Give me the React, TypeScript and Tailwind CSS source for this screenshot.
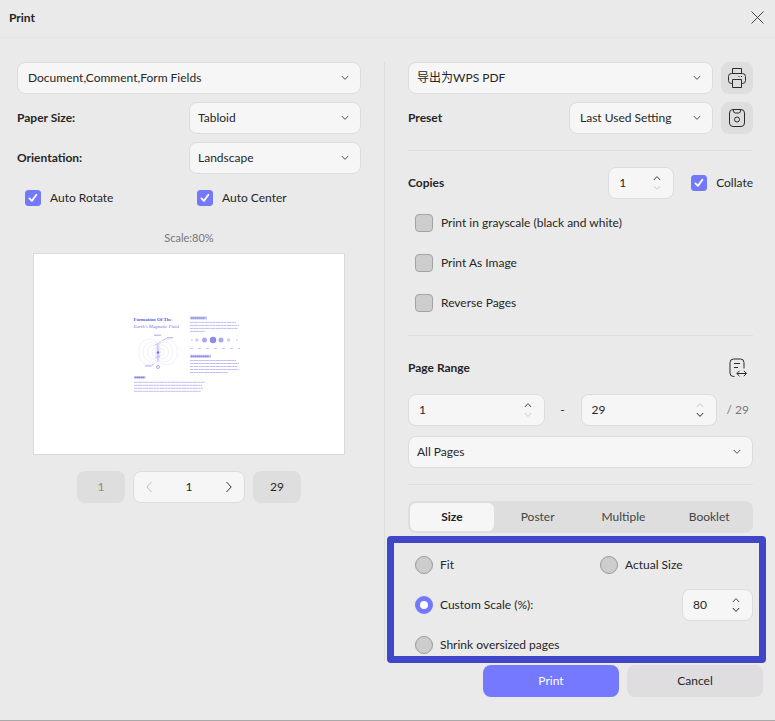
import { useState, type ReactNode } from "react";

function ChevronDown({ className = "" }: { className?: string }) {
  return (
    <svg className={className} width="8" height="6" viewBox="0 0 8 6" fill="none" stroke="currentColor" strokeWidth="1">
      <path d="M0.8 1 4 4.4 7.2 1" />
    </svg>
  );
}

function SelectBox({ label, options, className = "", pad = "pl-2" }: { label: string; options: string[]; className?: string; pad?: string }) {
  return (
    <div className={`relative ${className}`}>
      <select
        aria-label={label}
        className={`h-8 w-full appearance-none rounded-lg border border-[#dcdcdc] bg-[#f6f6f6] pr-8 outline-none ${pad}`}
      >
        {options.map((o) => (
          <option key={o}>{o}</option>
        ))}
      </select>
      <ChevronDown className="pointer-events-none absolute top-[13px] right-3 text-[#555]" />
    </div>
  );
}

function Spinner({
  label,
  initial,
  min = 1,
  max = 999,
  className = "",
}: {
  label: string;
  initial: number;
  min?: number;
  max?: number;
  className?: string;
}) {
  const [value, setValue] = useState(initial);
  return (
    <div className={`flex h-8 items-center rounded-lg border border-[#dcdcdc] bg-[#f6f6f6] pr-3 pl-2.5 ${className}`}>
      <input
        aria-label={label}
        inputMode="numeric"
        className="w-0 min-w-0 flex-1 bg-transparent outline-none"
        value={value}
        onChange={(e) => setValue(Number(e.target.value) || min)}
      />
      <div className="flex flex-col gap-1">
        <button
          type="button"
          aria-label={`Increase ${label}`}
          disabled={value >= max}
          onClick={() => setValue(value + 1)}
          className="text-[#444] disabled:text-[#c8c8c8]"
        >
          <ChevronDown className="rotate-180" />
        </button>
        <button
          type="button"
          aria-label={`Decrease ${label}`}
          disabled={value <= min}
          onClick={() => setValue(value - 1)}
          className="text-[#222] disabled:text-[#c8c8c8]"
        >
          <ChevronDown />
        </button>
      </div>
    </div>
  );
}

function Check({ label, checked = false, className = "" }: { label: string; checked?: boolean; className?: string }) {
  return (
    <label className={`flex h-8 items-center gap-2 ${className}`}>
      <span className="grid size-[18px] place-items-center">
        <input
          type="checkbox"
          defaultChecked={checked}
          className="peer col-start-1 row-start-1 size-[18px] appearance-none rounded-[4px] border border-[#a3a3a3] bg-[#cdcdcd] checked:size-4 checked:rounded-[3px] checked:border-[#7479fc] checked:bg-[#7479fc]"
        />
        <svg
          className="pointer-events-none col-start-1 row-start-1 hidden peer-checked:block"
          width="12"
          height="12"
          viewBox="0 0 12 12"
          fill="none"
          stroke="#fff"
          strokeWidth="1.8"
          strokeLinecap="round"
          strokeLinejoin="round"
        >
          <path d="M2.4 6.4 4.9 8.9 9.4 2.8" />
        </svg>
      </span>
      <span className="whitespace-nowrap">{label}</span>
    </label>
  );
}

function Radio({ label, checked = false, className = "" }: { label: string; checked?: boolean; className?: string }) {
  return (
    <label className={`flex h-8 items-center gap-[7px] ${className}`}>
      <input
        type="radio"
        name="scaling"
        defaultChecked={checked}
        className="size-[18px] appearance-none rounded-full border border-[#9a9a9a] bg-[#cdcdcd] checked:border-[5px] checked:border-[#7479fc] checked:bg-white"
      />
      <span className="whitespace-nowrap">{label}</span>
    </label>
  );
}

function IconButton({ label, children }: { label: string; children: ReactNode }) {
  return (
    <button type="button" aria-label={label} className="flex size-8 items-center justify-center rounded-lg bg-[#dedede] text-[#2b2b2b]">
      {children}
    </button>
  );
}

const rows = (x: number, y: number, widths: number[], step: number) =>
  widths.map((w, i) => (
    <line key={`${x}-${y}-${i}`} x1={x} x2={x + w} y1={y + i * step} y2={y + i * step} stroke="#bdbdf3" strokeWidth="1" strokeDasharray="3 .4 5 .4 2 .3" />
  ));

function PagePreview() {
  const moons: [number, number, string][] = [
    [192, 1, "#dcdcf8"],
    [197, 1.8, "#cfcff6"],
    [204.5, 2.5, "#a9a9ee"],
    [213, 3.2, "#8c8ce6"],
    [221, 2.5, "#a9a9ee"],
    [228.5, 1.8, "#cfcff6"],
    [237, 1, "#dcdcf8"],
  ];
  return (
    <svg viewBox="34 254 310 200" className="block w-full" role="img" aria-label="Page preview">
      <g fontFamily="'Liberation Serif', serif" fill="#5a5ad8">
        <text x="133.500" y="321.300" fontSize="4.900" fontWeight="bold">Formation Of The</text>
        <text x="133.500" y="328" fontSize="4.900" fontStyle="italic" fill="#7777e2">Earth's Magnetic Field</text>
      </g>
      <g fill="none" stroke="#e0e0fa" strokeWidth=".5">
        {[4, 7, 10, 13].map((r) => (
          <g key={r}>
            <ellipse cx={158 - r * 0.65} cy="352" rx={r * 0.85} ry={r} />
            <ellipse cx={158 + r * 0.65} cy="352" rx={r * 0.85} ry={r} />
          </g>
        ))}
      </g>
      <path d="M158 344v18M155 345l6-3M155 358l5-2M162 341l5-3M154 364l-3 2" stroke="#a0a0ea" strokeWidth=".6" fill="none" />
      <circle cx="158" cy="352.500" r="1.200" fill="#6c6cdc" />
      <circle cx="158" cy="367" r="1.500" fill="none" stroke="#8686e4" strokeWidth=".7" />
      <path d="M154 335.200h7M167 337.800h6M145 366h6" stroke="#9d9dea" strokeWidth=".9" />
      <g fill="#c4c4f5">
        <rect x="190" y="316.500" width="17" height="3" />
        <rect x="190" y="354.800" width="21" height="3" />
        <rect x="134" y="376" width="11.500" height="2.800" />
      </g>
      <path d="M191 318h14M191 356.300h18M135 377.400h9" stroke="#6f6fdd" strokeWidth=".9" strokeDasharray="1.600 .400" />
      {rows(190, 322.4, [46, 49, 48, 15], 3)}
      {moons.map(([x, r, c]) => (
        <circle key={x} cx={x} cy="340" r={r} fill={c} />
      ))}
      <path d="M190 348.500h50" stroke="#b8b8ee" strokeWidth=".8" strokeDasharray="3 5" />
      {rows(190, 360.5, [46, 49, 48, 49, 38], 3)}
      {rows(134, 382.3, [71, 68, 69, 67], 3)}
    </svg>
  );
}

const divider = "my-4 h-px border-0 bg-[#dfdfdf]";

export default function App() {
  const tabs = ["Size", "Poster", "Multiple", "Booklet"];
  const [tab, setTab] = useState("Size");
  return (
    <div className="flex min-h-screen flex-col border-b border-[#a9a9a9] bg-[#eaeaea] font-['Lato','Noto_Sans_CJK_SC',sans-serif] text-[12px] leading-4 text-[#262626]">
      <header className="flex h-[38px] items-center justify-between border-b border-[#e4e4e4] pr-[11px] pb-0.5 pl-[9px]">
        <h1 className="font-bold">Print</h1>
        <button type="button" aria-label="Close" className="text-[#444]">
          <svg width="13" height="13" viewBox="0 0 13 13" fill="none" stroke="currentColor">
            <path d="M.5.5l12 12M12.500.5l-12 12" />
          </svg>
        </button>
      </header>

      <main className="grid grid-cols-2 pt-6 pr-[22px] pl-[17px]">
        <section className="flex flex-col gap-2 border-r border-[#dedede] pr-[23px]">
          <SelectBox label="Content to print" options={["Document,Comment,Form Fields"]} pad="pl-2.5" />
          <div className="grid grid-cols-2 items-center">
            <span className="font-bold">Paper Size:</span>
            <SelectBox label="Paper Size" options={["Tabloid"]} />
          </div>
          <div className="grid grid-cols-2 items-center">
            <span className="font-bold">Orientation:</span>
            <SelectBox label="Orientation" options={["Landscape"]} />
          </div>
          <div className="grid grid-cols-2">
            <Check label="Auto Rotate" checked className="pl-[7px]" />
            <Check label="Auto Center" checked className="pl-[7px]" />
          </div>
          <div className="px-4">
            <p className="flex h-[31px] items-center justify-center text-[11px] text-[#777]">Scale:80%</p>
            <div className="border border-[#dadada] bg-white">
              <PagePreview />
            </div>
            <div className="mt-4 flex justify-center gap-2">
              <button type="button" disabled className="h-8 w-12 rounded-lg bg-[#dedede] text-[#8a8a8a]">1</button>
              <div className="flex h-8 w-28 items-center justify-between rounded-lg border border-[#dcdcdc] bg-[#f6f6f6] px-3">
                <button type="button" aria-label="Previous page" disabled className="text-[#bbb]">
                  <svg width="6" height="12" viewBox="0 0 6 12" fill="none" stroke="currentColor"><path d="M5.500 1 .8 6l4.700 5" /></svg>
                </button>
                <span>1</span>
                <button type="button" aria-label="Next page" className="text-[#333]">
                  <svg width="6" height="12" viewBox="0 0 6 12" fill="none" stroke="currentColor"><path d="M.5 1l4.700 5-4.700 5" /></svg>
                </button>
              </div>
              <button type="button" className="h-8 w-12 rounded-lg bg-[#dedede]">29</button>
            </div>
          </div>
        </section>

        <section className="pl-[23px]">
          <div className="flex gap-2">
            <SelectBox label="Printer" options={["导出为WPS PDF"]} className="flex-1" />
            <IconButton label="Printer properties">
              <svg width="20" height="22" viewBox="0 0 20 22" fill="none" stroke="currentColor" strokeLinejoin="round">
                <path d="M5.500 6.500v-5h9v5M5.500 16.500h-1a3 3 0 0 1-3-3v-4a3 3 0 0 1 3-3h11a3 3 0 0 1 3 3v4a3 3 0 0 1-3 3h-1" />
                <path d="M5.500 12.500h9v8h-9zM11.500 9.500h1M14 9.500h1" />
              </svg>
            </IconButton>
          </div>
          <div className="mt-2 flex items-center gap-2">
            <span className="flex-1 font-bold">Preset</span>
            <SelectBox label="Preset" options={["Last Used Setting"]} className="w-36" pad="pl-2.5" />
            <IconButton label="Save preset">
              <svg width="18" height="20" viewBox="0 0 18 20" fill="none" stroke="currentColor">
                <rect x="1.500" y="1.500" width="15" height="17" rx="3.500" />
                <path d="M5.500 1.500v1.500a2 2 0 0 0 2 2h3a2 2 0 0 0 2-2v-1.500" />
                <circle cx="9" cy="11.500" r="2.500" />
              </svg>
            </IconButton>
          </div>

          <hr className={divider} />

          <div className="flex items-center">
            <span className="flex-1 font-bold">Copies</span>
            <Spinner label="Copies" initial={1} className="w-[66px]" />
            <Check label="Collate" checked className="ml-4" />
          </div>
          <div className="mt-2 flex flex-col gap-2 pl-[7px]">
            <Check label="Print in grayscale (black and white)" />
            <Check label="Print As Image" />
            <Check label="Reverse Pages" />
          </div>

          <hr className={divider} />

          <div className="flex h-8 items-center justify-between pr-1.5">
            <span className="font-bold">Page Range</span>
            <button type="button" aria-label="Page range options" className="text-[#2b2b2b]">
              <svg width="18" height="20" viewBox="0 0 18 20" fill="none" stroke="currentColor">
                <path d="M5.500 18.500h-1a3.500 3.500 0 0 1-3.500-3.500v-10.500a3.500 3.500 0 0 1 3.500-3.500h7a3.500 3.500 0 0 1 3.500 3.500v6M5 5.500h6M5 9.500h4" />
                <path d="M8 15.500h9.500M10.500 12.800l-2.700 2.700 2.700 2.700M14.800 12.800l2.700 2.700-2.700 2.700" />
              </svg>
            </button>
          </div>
          <div className="mt-2.5 flex items-center">
            <Spinner label="First page" initial={1} max={29} className="flex-1" />
            <span className="w-9 text-center">-</span>
            <Spinner label="Last page" initial={29} max={29} className="flex-1" />
            <span className="w-9 pr-1 text-right text-[#777]">/ 29</span>
          </div>
          <SelectBox label="Pages" options={["All Pages"]} className="mt-2.5" />

          <hr className={divider} />

          <div role="tablist" className="grid h-8 grid-cols-4 gap-0.5 rounded-lg bg-[#dedede] p-0.5">
            {tabs.map((t) => (
              <button
                key={t}
                type="button"
                role="tab"
                aria-selected={t === tab}
                onClick={() => setTab(t)}
                className="rounded-md text-[#444] aria-selected:bg-[#f6f6f6] aria-selected:font-bold aria-selected:text-[#222]"
              >
                {t}
              </button>
            ))}
          </div>

          <div className="relative mt-4">
            <div className="flex flex-col gap-2 pl-[7px]">
              <div className="flex">
                <Radio label="Fit" className="flex-1" />
                <Radio label="Actual Size" className="w-[153px]" />
              </div>
              <div className="flex items-center justify-between">
                <Radio label="Custom Scale (%):" checked />
                <Spinner label="Scale percentage" initial={80} className="w-[71px]" />
              </div>
              <Radio label="Shrink oversized pages" />
            </div>
            <div className="pointer-events-none absolute -top-[13px] -right-[13px] -bottom-0.5 -left-[21px] rounded-[4px] border-[7px] border-[#4046c8]" />
          </div>
        </section>
      </main>

      <footer className="mt-1 flex justify-end gap-2 pr-3 pb-[23px]">
        <button type="button" className="h-8 w-[136px] rounded-lg bg-[#7479ff] text-white">Print</button>
        <button type="button" className="h-8 w-[136px] rounded-lg bg-[#dfdddf]">Cancel</button>
      </footer>
    </div>
  );
}
